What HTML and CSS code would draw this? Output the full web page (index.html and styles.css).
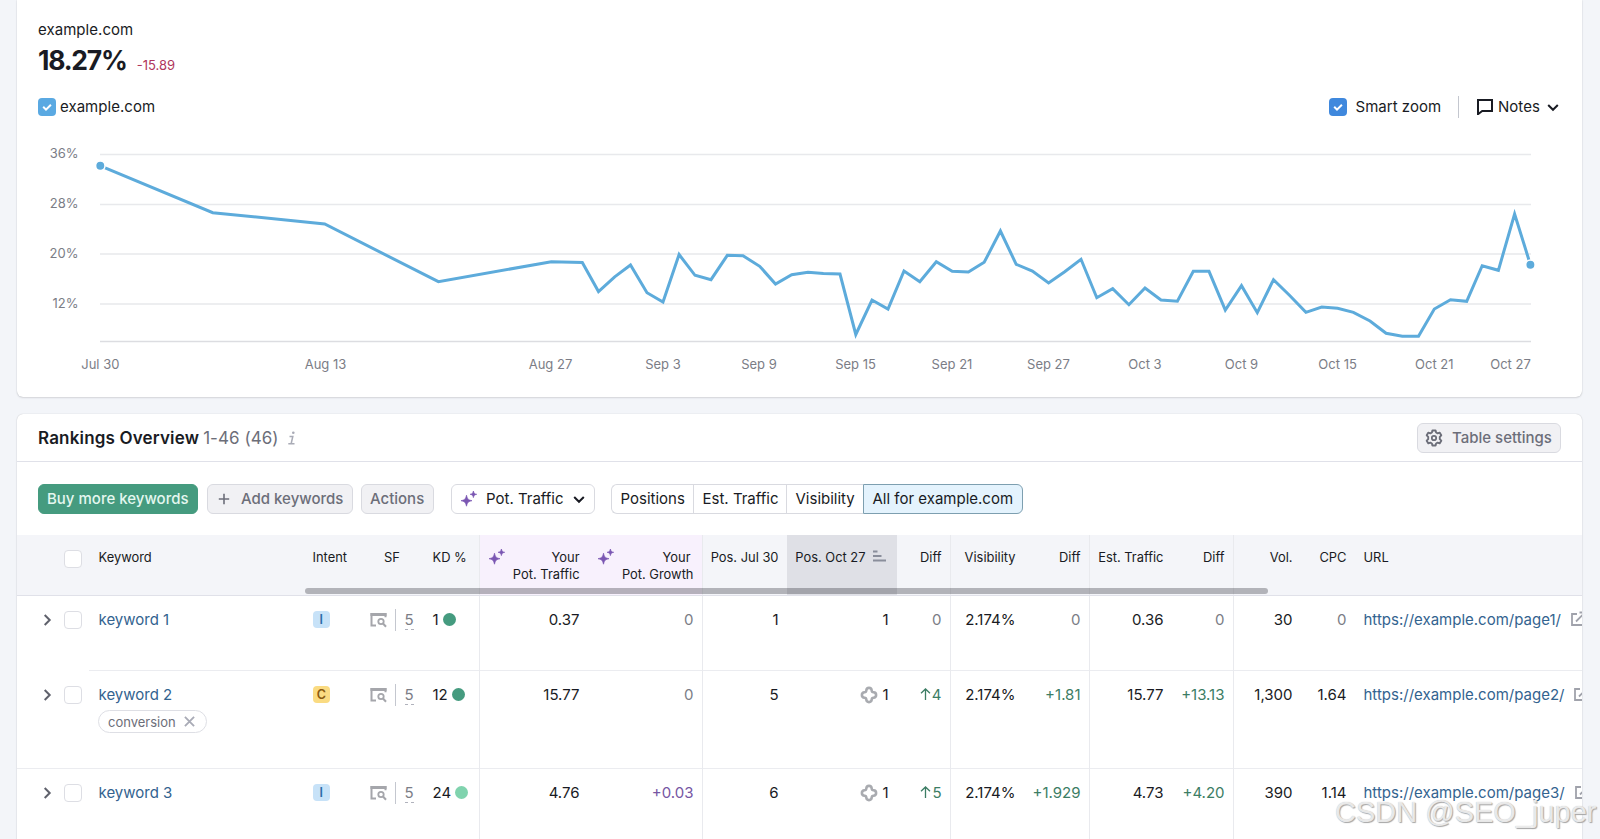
FILE: index.html
```html
<!DOCTYPE html>
<html lang="en">
<head>
  <meta charset="UTF-8" />
  <meta name="viewport" content="width=device-width, initial-scale=1.0" />
  <title>Position Tracking - example.com</title>
  <link rel="stylesheet" href="styles.css">
</head>
<body>

  <!-- shared icons -->
  <svg class="defs" width="0" height="0">
    <symbol id="check" viewBox="0 0 18 18"><path d="M5.200 8.800l2.800 2.800 4.900-4.900" fill="none" stroke="#fff" stroke-width="2"/></symbol>
    <symbol id="down" viewBox="0 0 12 12"><path d="M1.200 4L6 8.800 10.800 4" fill="none" stroke="currentColor" stroke-width="2"/></symbol>
    <symbol id="right" viewBox="0 0 12 12"><path d="M3.700 1L8.700 6l-5 5" fill="none" stroke="currentColor" stroke-width="2"/></symbol>
    <symbol id="sparkle" viewBox="0 0 16 16"><path d="M5.500 4.200c1 4 1.700 4.700 5.500 5.500-3.800.8-4.500 1.500-5.500 5.500-1-4-1.700-4.700-5.500-5.500 3.800-.8 4.500-1.500 5.500-5.500zM12.400 0c.6 2.400 1 2.800 3.300 3.300-2.300.5-2.700.9-3.300 3.300-.6-2.400-1-2.800-3.300-3.300 2.300-.5 2.700-.9 3.300-3.300z" fill="currentColor" stroke="currentColor" stroke-width=".7"/></symbol>
    <symbol id="serp" viewBox="0 0 17 16"><path d="M6 13.500H1.500V2H15.500V5.200" fill="none" stroke="currentColor" stroke-width="2"/><path d="M.5 1h16v3H.5z" fill="currentColor"/><circle cx="11" cy="9.500" r="2.700" fill="none" stroke="currentColor" stroke-width="1.800"/><path d="M13 11.500l3 3.200" stroke="currentColor" stroke-width="2"/></symbol>
    <symbol id="ai" viewBox="0 0 18 18"><path d="M9 1.900C11 1.900 11.600 3 11.700 4.500C11.800 5.700 12.300 6.200 13.500 6.300C15 6.400 16.100 7 16.100 9C16.100 11 15 11.600 13.500 11.700C12.300 11.800 11.800 12.300 11.700 13.500C11.600 15 11 16.100 9 16.100C7 16.100 6.400 15 6.300 13.500C6.200 12.300 5.700 11.800 4.500 11.700C3 11.600 1.900 11 1.900 9C1.900 7 3 6.400 4.500 6.300C5.700 6.200 6.200 5.700 6.300 4.500C6.400 3 7 1.900 9 1.900z" fill="none" stroke="currentColor" stroke-width="2.600"/></symbol>
    <symbol id="external" viewBox="0 0 16 16"><path d="M7 3H2v11h11V9M9.500 1.500H15V7M14.500 2L6 10.500" fill="none" stroke="currentColor" stroke-width="1.800"/></symbol>
    <symbol id="close" viewBox="0 0 12 12"><path d="M1 1l10 10M11 1L1 11" stroke="currentColor" stroke-width="2"/></symbol>
  </svg>

  <section class="card visibility">
    <div class="domain">example.com</div>
    <div class="score"><b>18.27%</b><span>-15.89</span></div>
    <div class="legend">
      <span class="check check-light"><svg><use href="#check"/></svg></span>
      <span class="legend-name">example.com</span>
      <span class="check smart"><svg><use href="#check"/></svg></span>
      <span class="smart-name">Smart zoom</span>
      <span class="bar"></span>
      <svg class="note" viewBox="0 0 16 16"><path d="M1 1h14v11H5.200L1 15.200z" fill="none" stroke="#191b23" stroke-width="2"/></svg>
      <span class="notes-name">Notes</span>
      <svg class="chevron"><use href="#down"/></svg>
    </div>
    <svg class="chart" viewBox="17 136 1566 260">
      <g class="grid">
        <path d="M100 154.500H1531M100 204.500H1531M100 254H1531M100 304H1531"/>
        <path class="axis" d="M100 341.500H1531"/>
      </g>
      <g class="ylabels">
        <text x="78.500" y="158.200">36%</text>
        <text x="78.500" y="208.200">28%</text>
        <text x="78.500" y="257.700">20%</text>
        <text x="78.500" y="307.700">12%</text>
      </g>
      <g class="xlabels">
        <text x="100.300" y="369">Jul 30</text>
        <text x="325.500" y="369">Aug 13</text>
        <text x="550.500" y="369">Aug 27</text>
        <text x="663" y="369">Sep 3</text>
        <text x="759" y="369">Sep 9</text>
        <text x="855.500" y="369">Sep 15</text>
        <text x="952" y="369">Sep 21</text>
        <text x="1048.500" y="369">Sep 27</text>
        <text x="1145" y="369">Oct 3</text>
        <text x="1241.500" y="369">Oct 9</text>
        <text x="1337.600" y="369">Oct 15</text>
        <text x="1434.300" y="369">Oct 21</text>
        <text x="1510.500" y="369">Oct 27</text>
      </g>
      <polyline class="line" points="100.300,165.800 212.800,212.700 324.700,224 438.400,281.700 551.300,261.700 582.300,262.500 598.500,291.500 614.700,276.800 630.500,265 647,292.700 663,302 679.100,254.500 695,275.300 711,279.700 727.300,255.300 743,255.700 759.700,266.300 775.500,284 791.700,274.700 808,272.300 823.400,273.500 840,274 855.800,334.500 872,300 888,309 904,271 919.800,281.700 936.300,261.700 952.200,271.300 968.400,272 984.200,262.300 1000.400,231 1016.200,264.300 1032.400,271 1048.600,283 1064.700,271.700 1081,259.300 1096.800,297.700 1112.700,288.700 1128.900,304.700 1145,288 1161,300 1177.400,301.300 1193.300,271.300 1209,271.300 1225.300,310 1241.500,285.700 1257.300,312.700 1273.500,279.700 1289.700,295.500 1305.900,312.300 1321.700,307 1337.600,308.300 1353.400,312.300 1370,321 1386.100,333.300 1402.300,336.300 1418.500,336.300 1434.300,309 1450.500,299.700 1466.700,301.300 1482.200,265.700 1498.400,270.300 1514.600,214 1530.400,264.700"/>
      <circle class="dot" cx="100.300" cy="165.800" r="4.700"/>
      <circle class="dot" cx="1530.400" cy="264.700" r="4.700"/>
    </svg>
  </section>

  <section class="card rankings">
    <header class="title">
      <h2>Rankings Overview</h2>
      <span class="count">1-46 (46)</span>
      <svg class="info" viewBox="0 0 8 14"><path d="M1.500 5.500H4.800L3.200 12.500M.3 12.800H6.500" fill="none" stroke="#a9abb6" stroke-width="1.500"/><circle cx="5.300" cy="1.800" r="1.300" fill="#a9abb6"/></svg>
      <button class="btn settings">
        <svg viewBox="0 0 18 18"><path d="M7.400 1.500h3.200l.5 2 1.500.8 2-.7 1.700 2.700-1.500 1.500v2.400l1.500 1.500-1.700 2.700-2-.7-1.500.8-.5 2H7.400l-.5-2-1.500-.8-2 .7-1.700-2.700 1.500-1.500V7.800L1.700 6.300l1.700-2.700 2 .7 1.500-.8z" fill="none" stroke="currentColor" stroke-width="1.900" stroke-linejoin="round"/><circle cx="9" cy="9" r="2.200" fill="none" stroke="currentColor" stroke-width="1.800"/></svg>
        Table settings
      </button>
    </header>

    <div class="toolbar">
      <button class="btn buy">Buy more keywords</button>
      <button class="btn add"><svg viewBox="0 0 12 12"><path d="M6 .8v10.400M.8 6h10.400" stroke="currentColor" stroke-width="1.600"/></svg>Add keywords</button>
      <button class="btn actions">Actions</button>
      <button class="btn select"><svg class="spark"><use href="#sparkle"/></svg>Pot. Traffic<svg class="chevron"><use href="#down"/></svg></button>
      <div class="pills">
        <span class="pill p1">Positions</span>
        <span class="pill p2">Est. Traffic</span>
        <span class="pill p3">Visibility</span>
        <span class="pill p4 active">All for example.com</span>
      </div>
    </div>

    <div class="table">
      <div class="row head">
        <div class="key"><span class="arrow"></span><span class="box"></span><span class="key-title">Keyword</span></div>
        <div class="left">Intent</div>
        <div class="sfhead">SF</div>
        <div class="left">KD %</div>
        <div class="num line-left ai-col"><svg class="spark"><use href="#sparkle"/></svg>Your<br>Pot. Traffic</div>
        <div class="num ai-col"><svg class="spark"><use href="#sparkle"/></svg><span class="nudge">Your</span><br>Pot. Growth</div>
        <div class="num line-left">Pos. Jul 30</div>
        <div class="num sorted">Pos. Oct 27<svg class="sort" viewBox="0 0 13 12"><path d="M0 1.500h4.500M0 6h8.500M0 10.500h13" stroke="#8a8e9b" stroke-width="1.800"/></svg></div>
        <div class="num">Diff</div>
        <div class="num line-left">Visibility</div>
        <div class="num">Diff</div>
        <div class="num line-left">Est. Traffic</div>
        <div class="num">Diff</div>
        <div class="num line-left">Vol.</div>
        <div class="num">CPC</div>
        <div class="left">URL</div>
        <div class="scrollbar"></div>
      </div>

      <div class="row r1">
        <div class="key"><svg class="arrow"><use href="#right"/></svg><span class="box"></span><a>keyword 1</a></div>
        <div class="left"><span class="intent intent-i">I</span></div>
        <div class="sf"><svg><use href="#serp"/></svg><i></i><span>5</span></div>
        <div class="left kd">1<span class="kd-dot kd-1"></span></div>
        <div class="num line-left">0.37</div>
        <div class="num mute">0</div>
        <div class="num line-left">1</div>
        <div class="num">1</div>
        <div class="num mute">0</div>
        <div class="num line-left">2.174%</div>
        <div class="num mute">0</div>
        <div class="num line-left">0.36</div>
        <div class="num mute">0</div>
        <div class="num line-left">30</div>
        <div class="num mute">0</div>
        <div class="left url"><a>https://example.com/page1/</a><svg><use href="#external"/></svg></div>
      </div>

      <div class="row r2">
        <div class="key"><svg class="arrow"><use href="#right"/></svg><span class="box"></span><a>keyword 2</a>
          <span class="tag">conversion<svg><use href="#close"/></svg></span>
        </div>
        <div class="left"><span class="intent intent-c">C</span></div>
        <div class="sf"><svg><use href="#serp"/></svg><i></i><span>5</span></div>
        <div class="left kd">12<span class="kd-dot kd-2"></span></div>
        <div class="num line-left">15.77</div>
        <div class="num mute">0</div>
        <div class="num line-left">5</div>
        <div class="num"><svg class="ai"><use href="#ai"/></svg>1</div>
        <div class="num up"><svg class="up-arrow" viewBox="0 0 11 12"><path d="M5.500 12V1M1 5.300L5.500 1l4.500 4.300" fill="none" stroke="currentColor" stroke-width="1.300"/></svg>4</div>
        <div class="num line-left">2.174%</div>
        <div class="num up">+1.81</div>
        <div class="num line-left">15.77</div>
        <div class="num up">+13.13</div>
        <div class="num line-left">1,300</div>
        <div class="num">1.64</div>
        <div class="left url"><a>https://example.com/page2/</a><svg><use href="#external"/></svg></div>
      </div>

      <div class="row r3">
        <div class="key"><svg class="arrow"><use href="#right"/></svg><span class="box"></span><a>keyword 3</a></div>
        <div class="left"><span class="intent intent-i">I</span></div>
        <div class="sf"><svg><use href="#serp"/></svg><i></i><span>5</span></div>
        <div class="left kd">24<span class="kd-dot kd-3"></span></div>
        <div class="num line-left">4.76</div>
        <div class="num grow">+0.03</div>
        <div class="num line-left">6</div>
        <div class="num"><svg class="ai"><use href="#ai"/></svg>1</div>
        <div class="num up"><svg class="up-arrow" viewBox="0 0 11 12"><path d="M5.500 12V1M1 5.300L5.500 1l4.500 4.300" fill="none" stroke="currentColor" stroke-width="1.300"/></svg>5</div>
        <div class="num line-left">2.174%</div>
        <div class="num up">+1.929</div>
        <div class="num line-left">4.73</div>
        <div class="num up">+4.20</div>
        <div class="num line-left">390</div>
        <div class="num">1.14</div>
        <div class="left url"><a>https://example.com/page3/</a><svg><use href="#external"/></svg></div>
      </div>
    </div>
  </section>

  <div class="watermark">CSDN @SEO_juper</div>

</body>
</html>
```
FILE: styles.css
```css
* {
  box-sizing: border-box;
}
body {
  margin: 0;
  height: 839px;
  overflow: hidden;
  position: relative;
  background: #f3f5f9;
  font-family: Inter, "Liberation Sans", sans-serif;
  font-size: 15px;
  line-height: 20px;
  color: #191b23;
}
svg {
  display: block;
  flex: none;
}
.defs {
  position: absolute;
}
.card {
  width: 1565px;
  margin-left: 17px;
  background: #fff;
  box-shadow: 0 0 1px rgba(25, 27, 35, 0.25), 0 1px 2px rgba(25, 27, 35, 0.12);
}

/* visibility chart */
.visibility {
  height: 397px;
  padding-top: 20px;
  border-radius: 0 0 6px 6px;
  overflow: hidden;
}
.domain {
  padding-left: 21px;
  letter-spacing: 0.05px;
}
.score {
  display: flex;
  align-items: baseline;
  height: 41px;
  padding-left: 21px;
  line-height: 41px;
}
.score b {
  font-size: 26.5px;
  letter-spacing: -1.2px;
}
.score span {
  margin-left: 10px;
  font-size: 13px;
  color: #b0375c;
}
.legend {
  display: flex;
  align-items: center;
  height: 22px;
  margin-top: 15px;
  padding-left: 21px;
  letter-spacing: 0.03px;
}
.check {
  width: 18px;
  height: 18px;
  border-radius: 4px;
  background: #3f88dd;
}
.check svg {
  width: 18px;
  height: 18px;
}
.check-light {
  background: #5aa9e2;
}
.legend-name {
  margin-left: 4px;
  width: 1269px;
}
.smart-name {
  margin-left: 8.500px;
  width: 102.500px;
}
.bar {
  width: 1px;
  height: 22px;
  background: #c4c7cf;
}
.note {
  width: 16px;
  height: 16px;
  margin-left: 18px;
}
.notes-name {
  margin-left: 5px;
  width: 49px;
}
.chevron {
  width: 12px;
  height: 12px;
}
.chart {
  width: 1566px;
  height: 260px;
  margin-top: 18px;
  font-size: 13px;
  fill: #7b7d86;
}
.grid {
  stroke: #e8e9ec;
  stroke-width: 1.3;
}
.axis {
  stroke: #dcdde1;
}
.ylabels {
  text-anchor: end;
}
.xlabels {
  text-anchor: middle;
}
.line {
  fill: none;
  stroke: #5dabdb;
  stroke-width: 3;
}
.dot {
  fill: #5dabdb;
  stroke: #fff;
  stroke-width: 1.5;
}

/* rankings */
.rankings {
  height: 440px;
  margin-top: 17px;
  border-radius: 6px 6px 0 0;
  overflow: hidden;
}
.title {
  display: flex;
  align-items: center;
  height: 48px;
  padding: 0 21px;
  border-bottom: 1px solid #e0e1e9;
}
h2 {
  margin: 0;
  font-size: 17px;
  font-weight: 600;
  letter-spacing: 0.17px;
}
.count {
  margin-left: 4px;
  font-size: 17px;
  letter-spacing: 0.05px;
  color: #6c6e79;
}
.info {
  width: 8px;
  height: 14px;
  margin-left: 9px;
}
.btn {
  display: flex;
  align-items: center;
  height: 30px;
  padding: 0 9px 1px;
  border: 1px solid #d9dae0;
  border-radius: 6px;
  background: #f1f1f4;
  color: #6c6e79;
  font: 500 15px Inter, sans-serif;
  white-space: nowrap;
}
.settings {
  width: 144px;
  margin-left: auto;
  padding: 0 7px;
}
.settings svg {
  width: 18px;
  height: 18px;
  margin-right: 9px;
}
.toolbar {
  display: flex;
  height: 73px;
  padding: 22px 0 0 21px;
}
.buy {
  width: 160px;
  border-color: #459b7f;
  background: #459b7f;
  color: #e4f7ef;
  padding: 0 8px 1px;
}
.add {
  width: 146px;
  margin-left: 9px;
}
.add svg {
  width: 12px;
  height: 12px;
  margin: 1px 11px 0 1px;
}
.actions {
  width: 73px;
  margin-left: 8px;
  padding: 0 8px 1px;
}
.select {
  width: 144px;
  margin-left: 17px;
  background: #fff;
  color: #191b23;
  font-weight: 400;
}
.spark {
  width: 16px;
  height: 16px;
  color: #7b57b3;
}
.select .spark {
  margin-right: 9px;
}
.select .chevron {
  margin-left: 9px;
}
.pills {
  display: flex;
  width: 412px;
  height: 30px;
  margin-left: 16px;
}
.pill {
  padding: 0 8.500px;
  border: 1px solid #d9dae0;
  border-right: 0;
  line-height: 28px;
  white-space: nowrap;
}
.p1 {
  width: 82px;
  border-radius: 6px 0 0 6px;
}
.p2 {
  width: 93px;
}
.p3 {
  width: 77px;
}
.p4 {
  width: 160px;
  border-radius: 0 6px 6px 0;
}
.active {
  border: 1px solid #7d9fb0;
  background: #e4f3fd;
}

/* table */
.row {
  display: grid;
  grid-template-columns: 287px 58px 62px 55px 109px 114px 85px 110px 53px 74px 65px 83px 61px 68px 54px 227px;
  line-height: 20px;
  background: linear-gradient(#ebecf0, #ebecf0) bottom / 100% 1px no-repeat;
}
.row > div {
  padding-top: 14px;
}
.head {
  position: relative;
  height: 61px;
  background: #f4f5f9;
  border-bottom: 1px solid #e0e1e9;
  font-size: 12.9px;
  line-height: 17px;
}
.head > div {
  padding-top: 14px;
}
.r1 {
  height: 75px;
  background-size: calc(100% - 72px) 1px;
  background-position: right bottom;
}
.r2 {
  height: 98px;
}
.r3 {
  height: 90px;
}
.row > .key {
  display: flex;
  flex-wrap: wrap;
  align-content: flex-start;
  align-items: center;
  padding-left: 24px;
}
.head > .key {
  padding-top: 15px;
}
.key-title {
  margin-top: -3px;
}
.arrow {
  width: 12px;
  height: 12px;
  color: #5f616c;
}
.box {
  width: 18px;
  height: 18px;
  margin: 0 16.500px 0 11px;
  border: 1px solid #dddee4;
  border-radius: 4px;
  background: #fff;
}
.key a {
  width: 190px;
}
a {
  color: #33638f;
}
.tag {
  display: flex;
  align-items: center;
  height: 23px;
  margin: 5px 0 0 57px;
  padding: 0 11px 0 9px;
  border: 1px solid #dedfe5;
  border-radius: 12px;
  font-size: 13px;
  color: #6c6e79;
}
.tag svg {
  width: 11px;
  height: 11px;
  margin-left: 8px;
  color: #a9abb6;
}
.left {
  padding-left: 8.500px;
}
.intent {
  display: block;
  width: 17.500px;
  height: 17px;
  margin-top: 1px;
  border-radius: 4px;
  font-size: 12.500px;
  font-weight: 600;
  line-height: 17px;
  text-align: center;
}
.intent-i {
  background: #c7e2f8;
  color: #2d6ea8;
}
.intent-c {
  background: #fadb82;
  color: #8a5a10;
}
.sfhead {
  padding-left: 22px;
}
.sf {
  display: flex;
  align-items: flex-start;
  padding-left: 8px;
  color: #7b7d86;
}
.sf svg {
  width: 17px;
  height: 16px;
  margin-top: 2px;
  color: #a5a6ab;
}
.sf i {
  width: 1px;
  height: 22px;
  margin: -1px 9px 0 8px;
  background: #c4c7cf;
}
.sf span {
  height: 20px;
  margin-left: -0.5px;
  border-bottom: 1px dashed #b0b2bc;
}
.kd {
  display: flex;
}
.kd-dot {
  width: 13px;
  height: 13px;
  margin: 3px 0 0 4px;
  border-radius: 50%;
  background: #459b7f;
}
.kd-3 {
  background: #80d3ae;
}
.num {
  position: relative;
  padding-right: 8.500px;
  text-align: right;
  white-space: nowrap;
}
.line-left {
  border-left: 1px solid #e9eaee;
}
.mute {
  color: #7b7d86;
}
.up {
  color: #3c7d64;
}
.grow {
  color: #7656a3;
}
.ai-col {
  background: #f8f1fd;
}
.row:not(.head) .ai-col {
  background: none;
}
.ai-col .spark {
  float: left;
  margin: 0 0 0 9px;
}
.ai-col + .ai-col .spark {
  margin-left: 10px;
}
.nudge {
  margin-right: 3px;
}
.sorted {
  display: flex;
  justify-content: flex-end;
  background: #dfe0e6;
}
.sort {
  width: 13px;
  height: 12px;
  margin: 1px 3px 0 7px;
}
.ai {
  display: inline-block;
  width: 18px;
  height: 18px;
  margin: -2px 4px 0 0;
  vertical-align: -4px;
  color: #a9abb0;
}
.up-arrow {
  display: inline-block;
  width: 11px;
  height: 12px;
  margin-right: 1px;
}
.url {
  display: flex;
  overflow: hidden;
  white-space: nowrap;
}
.url svg {
  width: 16px;
  height: 16px;
  margin: 1px 0 0 9px;
  color: #a0a2ab;
}
.row .scrollbar {
  position: absolute;
  left: 288px;
  bottom: 1px;
  width: 963px;
  height: 6px;
  padding: 0;
  border-radius: 3px;
  background: rgba(25, 27, 35, 0.3);
}

.watermark {
  position: absolute;
  left: 1335px;
  top: 792px;
  font: 29px/40px "Liberation Sans", sans-serif;
  color: rgba(244, 244, 244, 0.85);
  text-shadow: 1px 1px 1px #a5a5a5, 0 0 1px #bbb;
  white-space: nowrap;
}
```
